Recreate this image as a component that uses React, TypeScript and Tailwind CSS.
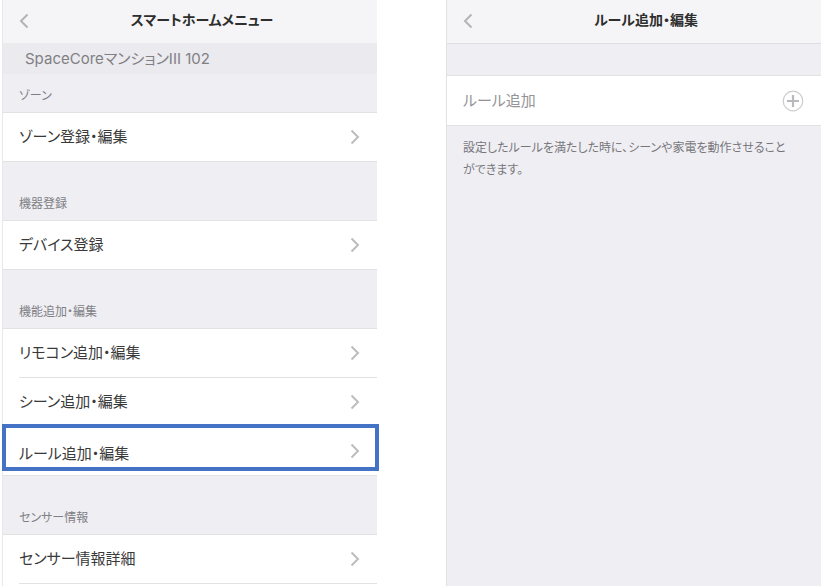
import React from 'react'

type Item = { label: string; highlighted?: boolean }
type Section = { title: string; items: Item[] }

const sections: Section[] = [
  { title: 'ゾーン', items: [{ label: 'ゾーン登録・編集' }] },
  { title: '機器登録', items: [{ label: 'デバイス登録' }] },
  {
    title: '機能追加・編集',
    items: [{ label: 'リモコン追加・編集' }, { label: 'シーン追加・編集' }, { label: 'ルール追加・編集', highlighted: true }],
  },
  { title: 'センサー情報', items: [{ label: 'センサー情報詳細' }] },
]

function Chevron({ left = false }: { left?: boolean }) {
  return (
    <svg width="10" height="16" viewBox="0 0 10 16" fill="none" stroke={left ? '#b4b4b6' : '#bdbdbf'} strokeWidth={2} aria-hidden="true">
      <path d={left ? 'M8.5 1.5L2 8l6.5 6.5' : 'M1.5 1.5L8 8l-6.5 6.5'} />
    </svg>
  )
}

function Header({ title }: { title: string }) {
  return (
    <header className="flex h-[43px] shrink-0 items-center bg-[#f5f5f7] px-4 pb-1">
      <button type="button" aria-label="戻る" className="flex w-6 pt-0.5">
        <Chevron left />
      </button>
      <h1 className="flex-1 pb-0.5 text-center text-[14px] leading-5 font-bold text-[#2e2e2e]">{title}</h1>
    </header>
  )
}

function MenuRow({ item, divided }: { item: Item; divided: boolean }) {
  return (
    <li className="relative">
      <button type="button" className="flex h-12 w-full items-center justify-between pr-[17px] pl-4 text-left text-[15px] leading-5 text-[#3a3a3a]">
        <span className={item.highlighted ? 'pt-1' : 'pb-0.5'}>{item.label}</span>
        <Chevron />
      </button>
      {divided && <div className="ml-4 h-px bg-[#e2e2e4]" />}
      {item.highlighted && <div className="pointer-events-none absolute -top-[3px] -right-[2px] -left-px h-[47px] border-4 border-[#4472c4]" />}
    </li>
  )
}

function MenuScreen() {
  return (
    <section className="flex min-w-0 flex-1 flex-col border-l border-[#e8e8ea] bg-[#efeef3]">
      <Header title="スマートホームメニュー" />
      <p className="h-[31px] shrink-0 bg-[#ebeaef] pl-[22px] font-[Inter,'Noto_Sans_CJK_JP',sans-serif] text-[15px] leading-[31px] text-[#808084]">
        SpaceCoreマンションIII 102
      </p>
      {sections.map((section, i) => {
        const last = i === sections.length - 1
        return (
          <div key={section.title} className={last ? 'flex flex-1 flex-col' : ''}>
            <h2 className={`flex items-end pb-[9px] pl-4 text-[12px] leading-4 text-[#808084] ${i === 0 ? 'h-[38px]' : 'h-[58px]'}`}>{section.title}</h2>
            <ul className={`border-t border-[#e2e2e4] bg-white ${last ? 'flex-1' : 'border-b'}`}>
              {section.items.map((item, n) => (
                <MenuRow key={item.label} item={item} divided={last || n < section.items.length - 1} />
              ))}
            </ul>
          </div>
        )
      })}
    </section>
  )
}

function RuleScreen() {
  return (
    <section className="flex min-w-0 flex-1 flex-col border-l border-[#e2e2e5] bg-[#efeef3]">
      <Header title="ルール追加・編集" />
      <div className="border-t border-[#dfdfe3] pt-[31px]">
        <button type="button" className="flex h-[51px] w-full items-center justify-between border-y border-[#e2e2e4] bg-white pr-[17px] pl-4 text-[15px] leading-5 text-[#949496]">
          <span className="pb-0.5">ルール追加</span>
          <svg width="22" height="22" viewBox="0 0 22 22" fill="none" aria-hidden="true">
            <circle cx="11" cy="11" r="9.8" stroke="#cbcbcd" strokeWidth={1.2} />
            <path d="M11 5v12M5 11h12" stroke="#b9b9bb" strokeWidth={2.2} />
          </svg>
        </button>
        <p className="pt-[10px] pr-7 pl-4 text-[12px] leading-[22px] text-[#77777b]">
          設定したルールを満たした時に、シーンや家電を動作させることができます。
        </p>
      </div>
    </section>
  )
}

export default function App() {
  return (
    <main
      lang="ja"
      className="flex min-h-screen gap-[69px] bg-white pr-px pl-[2px] font-['Noto_Sans_CJK_JP',sans-serif] [font-feature-settings:'palt']"
    >
      <MenuScreen />
      <RuleScreen />
    </main>
  )
}
